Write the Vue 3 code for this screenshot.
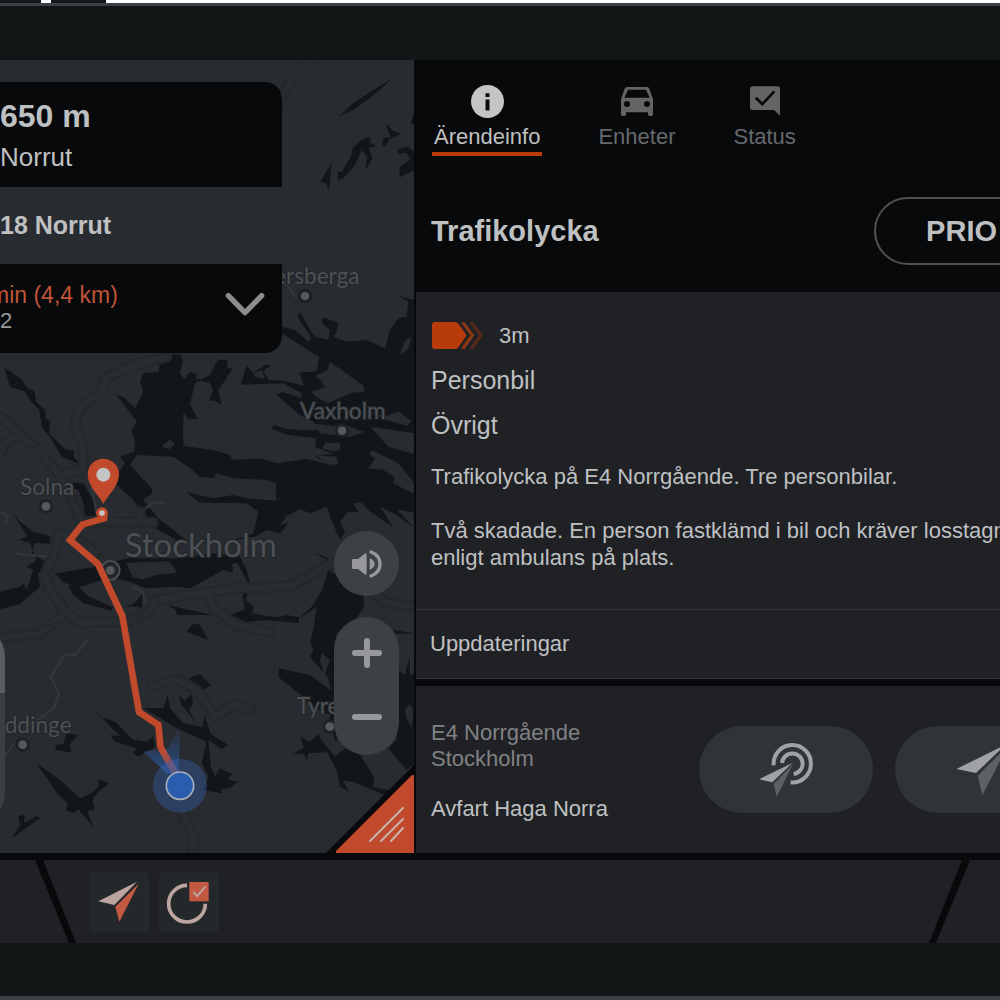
<script setup>
import { ref } from 'vue';

const activeTab = ref('info');

const tabs = [
	{ id: 'info', label: 'Ärendeinfo' },
	{ id: 'units', label: 'Enheter' },
	{ id: 'status', label: 'Status' },
];

const water = [
	'498,42 542,44 548,62 540,98 552,120 570,95 590,101 588,118 605,118 630,106 640,85 655,58 683,62 681,84 698,86 674,122 655,150 664,194 645,182 628,182 640,150 628,128 600,122 585,130 570,192 592,236 565,238 550,218 550,318 640,330 690,344 697,360 780,355 830,370 920,357 1010,378 1040,388 950,354 945,346 1000,342 945,320 948,295 860,284 812,265 825,255 860,268 950,272 940,245 900,226 830,165 845,155 903,174 905,160 850,130 735,134 723,132 740,78 760,98 800,72 812,78 790,92 805,120 850,122 912,137 898,98 950,94 957,50 885,5 845,-20 845,-40 885,-30 925,5 935,-5 892,-70 900,-85 920,-48 945,-10 985,0 990,-30 966,-50 968,-68 1015,-52 1010,-25 1000,-10 1040,5 1100,0 1155,25 1170,-30 1195,-65 1220,-70 1225,-115 1195,-132 1242,-120 1242,518 1190,508 1240,560 1180,520 1140,500 1180,562 1110,515 1085,488 1060,490 1075,515 1045,515 1020,545 1035,575 1020,600 990,530 980,500 930,520 900,508 860,528 840,555 865,550 840,580 800,570 765,590 700,600 660,615 760,580 775,515 740,490 600,488 560,457 640,475 700,465 740,475 828,482 828,430 800,420 700,415 650,400 640,415 600,410 570,385 520,350 410,345 390,375 455,445 458,460 428,480 480,540 560,600 530,600 450,555 400,480 345,430 355,400 375,370 360,350 402,335 405,310 395,270 410,245 350,165 370,170 405,205 430,155 420,125 430,100 475,95 480,70',
	'165,700 300,678 380,655 530,655 640,640 720,650 740,690 752,735 737,780 762,802 755,820 830,832 860,825 897,832 897,850 800,840 740,846 690,825 735,808 728,770 740,720 712,668 695,672 700,698 670,690 570,745 520,740 440,745 390,725 340,715 290,725 240,740 190,728',
	'36,515 60,545 100,575 150,588 152,612 105,608 95,640 150,675 115,700 120,740 60,792 0,808 0,755 60,740 70,730 80,750 100,690 80,680 110,660 90,610 60,600 38,605 82,590',
	'205,735 230,735 262,768 340,802 335,812 250,790 215,760',
	'370,800 400,792 430,760 425,805 405,798',
	'190,425 250,430 280,480 288,530 255,530 250,490 235,450 200,440',
	'12,82 65,118 82,145 103,152 108,185 135,210 137,235 150,245 147,280 195,328 222,332 220,348 238,372 185,350 150,290 125,260 118,210 90,180 75,155 30,140',
	'945,638 985,655 1000,662 975,658',
	'985,690 1090,755 1092,800 1060,850 1010,880 1005,920 1010,1210 985,1150 1000,1080 985,1015 975,1000 990,960 965,940 960,960 972,1000 930,950 940,930 930,905 940,870 950,800 895,838 935,800 965,752',
	'1180,870 1242,880 1182,882',
	'1195,990 1215,1005 1228,950 1230,1010 1242,1000 1242,1272 1220,1290 1165,1225 1190,1200',
	'836,985 930,1005 1005,1060 1005,1130 965,1115 836,1012',
	'500,795 640,825 532,825 525,808',
	'560,875 580,850 600,855 625,900',
	'566,1015 600,1002 632,1035 610,1050',
	'538,1065 552,1082 575,1062 579,1090 567,1110 588,1148 543,1092',
	'430,1104 490,1105 503,1065 510,1105 550,1150 608,1162 613,1125 632,1182 685,1215 665,1228 625,1200 633,1280 645,1310 660,1285 697,1302 683,1318 712,1325 690,1345 665,1346 665,1360 610,1350 625,1310 605,1270 620,1205 530,1165',
	'272,1100 300,1130 345,1145 400,1200 440,1205 460,1190 465,1220 415,1250 400,1240 410,1225 345,1205 330,1185 360,1188',
	'110,1270 180,1320 240,1375 275,1360 295,1340 295,1318 327,1330 290,1360 278,1380 284,1410 262,1412 280,1462 235,1408 220,1420 197,1410 205,1392 175,1365',
	'35,1495 60,1455 55,1427 75,1425 72,1448 110,1428 120,1435',
	'165,1215 190,1212 200,1180 235,1185 208,1215 215,1238 168,1230',
	'880,1240 912,1225 900,1190 930,1205 955,1183 985,1236 925,1240 920,1262 912,1242',
	'960,1195 1005,1250 1035,1225 1080,1245 1122,1310 1120,1342 1180,1352 1160,1368 1060,1325 1030,1322 1048,1355 1020,1340 1010,1290',
	'1018,-672 1060,-712 1182,-788 1110,-726 1060,-690',
	'962,-475 995,-533 990,-475 987,-448 978,-470',
	'1013,-505 1025,-504 1052,-550 1060,-580 1085,-600 1110,-610 1112,-590 1128,-583 1105,-575 1118,-545 1095,-508 1102,-548 1085,-570 1065,-525 1035,-490 1015,-478',
	'1148,-582 1150,-605 1172,-608 1156,-650 1180,-628 1203,-618 1165,-600 1158,-582',
	'1193,-572 1225,-580 1242,-565 1242,-510 1200,-488 1198,-520 1232,-542 1218,-562 1195,-558',
	'1232,-650 1242,-680 1242,-645',
];

const islands = [
	'990,66 1092,138 1092,156 1055,158 985,190 950,172 935,155 975,142 960,118 945,108 982,90',
	'935,250 1000,258 1030,252 1092,276 1050,290 960,280',
	'1112,260 1242,280 1242,342 1165,320',
	'1120,222 1160,228 1195,215 1234,242 1222,258 1160,240',
	'1115,330 1145,345 1195,370 1242,428 1242,462 1180,430 1184,412 1150,390 1105,385 1125,355 1108,345',
	'975,308 1020,310 1020,330 1000,335 968,325',
	'945,345 1010,350 1015,372 990,374',
	'1200,45 1215,0 1235,-8 1224,28',
	'760,98 785,90 795,116 765,112',
	'485,320 510,298 525,312 508,328',
	'378,668 508,664 532,698 470,704 430,718 398,712',
	'1215,1110 1228,1092 1240,1110 1235,1165 1217,1130',
];

const roads = [
	'0,230 60,280 130,345 180,405 245,540',
	'0,340 15,310 45,290',
	'500,50 400,75 320,115 300,158 238,205 225,250 250,320 250,392 180,402',
	'245,545 350,545 460,548',
	'420,515 425,545',
	'290,640 225,592 175,580 165,640 132,705 160,765 195,812 240,848 380,845 440,820 470,780 720,742 780,745 880,735 960,688 1010,665',
	'190,822 120,882 0,892',
	'625,765 640,802 710,857 808,876',
	'458,1038 500,1025 530,1018 590,1050 645,1132 700,1095 750,1106',
	'500,1310 540,1400 580,1490 580,1545',
	'1100,745 1160,788 1242,798',
	'830,-700 870,-775 945,-850',
];

const streets = [
	'262,900 225,945 195,945 152,1010 178,1062 160,1105 100,1150',
	'50,640 80,645 145,650',
	'430,510 458,488 495,488',
	'0,515 25,532 20,545',
	'275,445 288,510',
	'10,1250 45,1210',
	'395,740 428,755 435,785',
	'862,-165 885,-130',
];

const places = [
	{ name: 'ersberga', x: 822, y: -167, cx: 915, cy: -132 },
	{ name: 'Vaxholm', x: 900, y: 236, cx: 1026, cy: 272 },
	{ name: 'Solna', x: 60, y: 464, cx: 138, cy: 499 },
	{ name: 'ddinge', x: 14, y: 1178, cx: 68, cy: 1214 },
	{ name: 'Tyre', x: 890, y: 1123, cx: 989, cy: 1160 },
];
</script>

<template>
	<div class="screen">
		<div class="strip">
			<span class="strip-dark"></span>
			<span class="strip-gap"></span>
			<span class="strip-dark strip-wide"></span>
		</div>
		<div class="bezel bezel-top"></div>

		<main class="main">
			<section class="map">
				<svg class="map-canvas" viewBox="0 -840 1242 2379" preserveAspectRatio="xMidYMid slice" aria-hidden="true">
					<defs>
						<linearGradient id="beam" x1="0" y1="1" x2="0" y2="0">
							<stop offset="0" stop-color="#2a5fae" stop-opacity="0.7" />
							<stop offset="1" stop-color="#2a5fae" stop-opacity="0" />
						</linearGradient>
						<linearGradient id="route-end" gradientUnits="userSpaceOnUse" x1="482" y1="1225" x2="530" y2="1305">
							<stop offset="0" stop-color="#c1492c" />
							<stop offset="1" stop-color="#6a5578" />
						</linearGradient>
					</defs>
					<rect x="0" y="-840" width="1242" height="2379" fill="#282b2f" />
					<g fill="#12161a">
						<polygon v-for="(points, index) in water" :key="index" :points="points" />
					</g>
					<g fill="#282b2f">
						<polygon v-for="(points, index) in islands" :key="index" :points="points" />
					</g>
					<g fill="none" stroke-linecap="round" stroke-linejoin="round">
						<polyline v-for="(points, index) in streets" :key="index" :points="points" stroke="#33363a" stroke-width="7" />
						<polyline v-for="(points, index) in roads" :key="index" :points="points" stroke="#23282a" stroke-width="34" />
						<polyline v-for="(points, index) in roads" :key="index" :points="points" stroke="#282c2f" stroke-width="20" />
					</g>

					<g class="place">
						<template v-for="place in places" :key="place.name">
							<circle :cx="place.cx" :cy="place.cy" r="22" fill="#1e2125" />
							<circle :cx="place.cx" :cy="place.cy" r="13" fill="#55585c" />
							<text :x="place.x" :y="place.y" font-size="68">{{ place.name }}</text>
						</template>
						<circle cx="331" cy="691" r="28" fill="#22262a" stroke="#4b4e53" stroke-width="6" />
						<circle cx="331" cy="691" r="13" fill="#55585c" />
						<text x="374" y="651" font-size="99">Stockholm</text>
					</g>

					<polygon points="430,1235 505,1225 542,1150 535,1310 500,1300" fill="url(#beam)" />
					<g fill="none" stroke-width="20">
						<polyline points="312,520 312,535 247,554 210,600 294,672 367,828 417,1116 475,1155 482,1225" stroke="#c1492c" />
						<path d="M482 1223L530 1305" stroke="url(#route-end)" />
					</g>
					<circle cx="540" cy="1337" r="81" fill="#3562ae" fill-opacity="0.4" />
					<circle cx="540" cy="1337" r="41" fill="#2a5dae" stroke="#a9aeb8" stroke-width="5" />
					<circle cx="306" cy="519" r="13" fill="#c4c4c4" stroke="#c1492c" stroke-width="9" />
					<path d="M310 492C300 470 263 440 263 403a47 47 0 0 1 94 0C357 440 320 470 310 492z" fill="#c1492c" />
					<circle cx="310" cy="404" r="21" fill="#c4c4c4" />
				</svg>

				<div class="side-handle"></div>

				<div class="nav-card">
					<div class="nav-next">
						<p class="nav-distance">650 m</p>
						<p class="nav-road">Norrut</p>
					</div>
					<p class="nav-then">18 Norrut</p>
					<div class="nav-eta">
						<div>
							<p class="nav-time">min (4,4 km)</p>
							<p class="nav-arrival">2</p>
						</div>
						<button type="button" class="nav-toggle" aria-label="Visa mer">
							<svg width="40" height="24" viewBox="0 0 120 72">
								<path d="M10 11L60 62L110 11" fill="none" stroke="#8b8c8e" stroke-width="16" stroke-linecap="round" stroke-linejoin="round" />
							</svg>
						</button>
					</div>
				</div>

				<div class="map-tools">
					<button type="button" class="tool-sound" aria-label="Ljud">
						<svg width="30" height="28" viewBox="0 0 90 84">
							<path d="M4 27H18L38 11Q44 7 44 14V70Q44 77 38 73L18 57H4Q0 57 0 53V31Q0 27 4 27z" fill="#96989c" />
							<path d="M53 24Q68 32 68 42Q68 52 53 60z" fill="#96989c" />
							<path d="M57 6Q84 16 84 42Q84 68 57 78" fill="none" stroke="#96989c" stroke-width="10" stroke-linecap="round" />
						</svg>
					</button>
					<div class="tool-zoom">
						<button type="button" aria-label="Zooma in">
							<svg width="30" height="30" viewBox="0 0 30 30">
								<path d="M15 3V27M3 15H27" stroke="#96989c" stroke-width="6" stroke-linecap="round" />
							</svg>
						</button>
						<button type="button" aria-label="Zooma ut">
							<svg width="30" height="30" viewBox="0 0 30 30">
								<path d="M3 15H27" stroke="#96989c" stroke-width="6" stroke-linecap="round" />
							</svg>
						</button>
					</div>
				</div>

				<button type="button" class="corner" aria-label="Ändra storlek">
					<svg width="88" height="88" viewBox="0 0 88 88">
						<path d="M88 0V88H0z" fill="#08090b" />
						<path d="M86 10L88 10V88H10V86z" fill="#c1492c" />
						<path d="M44 76L77 43M55 76L77 54M65 76L77 63" stroke="#c9b3ab" stroke-width="2" stroke-linecap="round" />
					</svg>
				</button>
			</section>

			<section class="panel">
				<header class="head">
					<nav class="tabs">
						<button
							v-for="tab in tabs"
							:key="tab.id"
							type="button"
							class="tab"
							:class="{ 'tab-active': activeTab === tab.id }"
							@click="activeTab = tab.id">
							<span class="tab-icon">
								<svg v-if="tab.id === 'info'" width="33" height="33" viewBox="0 0 100 100">
									<circle cx="50" cy="50" r="50" fill="#c3c4c6" />
									<path d="M44 25H56V36H44zM44 44H56V77H44z" fill="#08090b" />
								</svg>
								<svg v-else-if="tab.id === 'units'" width="32" height="29" viewBox="0 0 96 87">
									<path
										fill="#636466"
										fill-rule="evenodd"
										d="M18 0H78Q83 0 85 5L96 37V82Q96 87 91 87H86Q81 87 81 82V76H15V82Q15 87 10 87H5Q0 87 0 82V37L11 5Q13 0 18 0zM21 8L10 32H86L75 8zM18 42a9 9 0 1 0 0 18a9 9 0 1 0 0 -18zM78 42a9 9 0 1 0 0 18a9 9 0 1 0 0 -18z" />
								</svg>
								<svg v-else width="30" height="30" viewBox="0 0 90 90">
									<path d="M8 1H82a8 8 0 0 1 8 8V89L72 72H8a8 8 0 0 1-8-8V9a8 8 0 0 1 8-8z" fill="#636466" />
									<path d="M17 35L37 54L73 16" fill="none" stroke="#08090b" stroke-width="8" />
								</svg>
							</span>
							{{ tab.label }}
						</button>
					</nav>
					<div class="title-row">
						<h1>Trafikolycka</h1>
						<button type="button" class="prio">PRIO</button>
					</div>
				</header>

				<article class="details">
					<div class="age">
						<svg width="53" height="27" viewBox="0 0 159 81">
							<path d="M12 0H72Q79 0 83 6L107 40L83 75Q79 81 72 81H12Q3 81 3 72V9Q3 0 12 0z" fill="#b83c0b" />
							<path d="M97 4L124 40L97 77" fill="none" stroke="#8a3715" stroke-width="10" stroke-linecap="round" />
							<path d="M123 4L150 40L123 77" fill="none" stroke="#55291b" stroke-width="10" stroke-linecap="round" />
						</svg>
						<span>3m</span>
					</div>
					<p class="kind">Personbil</p>
					<p class="kind">Övrigt</p>
					<p class="note">Trafikolycka på E4 Norrgående. Tre personbilar.</p>
					<p class="note">Två skadade. En person fastklämd i bil och kräver losstagni<br />enligt ambulans på plats.</p>
				</article>

				<h2 class="updates">Uppdateringar</h2>

				<div class="location">
					<div class="address">
						<p class="street">E4 Norrgående<br />Stockholm</p>
						<p>Avfart Haga Norra</p>
					</div>
					<button type="button" class="pill" aria-label="Sänd position">
						<svg width="54" height="54" viewBox="238 126 162 162">
							<g fill="none" stroke="#a0a2a5" stroke-width="12">
								<path d="M282 193A56 56 0 1 1 333 244" />
								<path d="M307 186A31 31 0 1 1 342 219" />
							</g>
							<path d="M338 186L238 235L278 244z" fill="#a0a2a5" />
							<path d="M340 189L282 249L291 288z" fill="#5d6163" />
						</svg>
					</button>
					<button type="button" class="pill" aria-label="Navigera">
						<svg width="52" height="52" viewBox="828 131 156 156">
							<path d="M977 133L829 206L888 218z" fill="#a0a2a5" />
							<path d="M983 137L893 226L907 285z" fill="#5d6163" />
						</svg>
					</button>
				</div>
			</section>
		</main>

		<footer class="dock">
			<div class="dock-left"></div>
			<div class="dock-tray">
				<button type="button" class="tile" aria-label="Navigering">
					<svg width="60" height="60" viewBox="0 0 180 180">
						<path d="M144 29L28 88L76 99z" fill="#bba59e" />
						<path d="M149 35L79 104L91 149z" fill="#c25940" />
					</svg>
				</button>
				<button type="button" class="tile" aria-label="Uppdrag">
					<svg width="60" height="60" viewBox="0 0 180 180">
						<path d="M84 40A55 55 0 1 0 139 95" fill="none" stroke="#bba59e" stroke-width="11" />
						<rect x="91" y="30" width="58" height="58" fill="#c25940" />
						<path d="M103 60L115 72L139 44" fill="none" stroke="#bba59e" stroke-width="6" />
					</svg>
				</button>
			</div>
			<div class="dock-right"></div>
		</footer>
		<div class="bezel bezel-bottom"></div>
	</div>
</template>

<style>
body {
	background: #121616;
}
</style>

<style scoped>
.screen {
	overflow: hidden;
	background: #08090b;
	color: #bfc0c2;
	font-family: "Liberation Sans", Arial, sans-serif;
	font-size: 22px;
	line-height: 27px;
}

p,
h1,
h2 {
	margin: 0;
}

button {
	margin: 0;
	padding: 0;
	border: none;
	background: none;
	color: inherit;
	font: inherit;
	cursor: pointer;
}

svg {
	display: block;
}

.strip {
	display: flex;
	height: 3px;
	background: #fff;
}

.strip-dark {
	width: 41px;
	background: #121616;
}

.strip-gap {
	width: 10px;
}

.strip-wide {
	width: 55px;
}

.bezel {
	background: #121616;
}

.bezel-top {
	height: 54px;
	border-top: 3px solid #3a4246;
}

.bezel-bottom {
	height: 53px;
	border-bottom: 4px solid #3a4246;
}

.main {
	display: grid;
	grid-template-columns: 41.4% 1fr;
}

.map {
	position: relative;
	overflow: hidden;
}

.map-canvas {
	position: absolute;
	inset: 0;
	width: 100%;
	height: 100%;
}

.place text {
	fill: #4d5055;
	stroke: #23272a;
	stroke-width: 6px;
	paint-order: stroke;
	font-family: Lato, "Noto Sans", sans-serif;
}

.side-handle {
	position: absolute;
	left: -60px;
	bottom: 28px;
	width: 65px;
	height: 200px;
	border-radius: 32px;
	background: linear-gradient(#5a5d61 68px, #3b3e42 68px);
}

.nav-card {
	position: absolute;
	top: 22px;
	left: 0;
	width: 68%;
	overflow: hidden;
	border-radius: 0 17px 17px 0;
	background: #08090b;
}

.nav-next {
	padding: 16px 0 15px;
}

.nav-distance {
	font-size: 32px;
	font-weight: bold;
	line-height: 36px;
}

.nav-road {
	margin-top: 8px;
	font-size: 26px;
	line-height: 30px;
}

.nav-then {
	background: #282b2f;
	font-size: 25px;
	font-weight: bold;
	line-height: 77px;
}

.nav-eta {
	display: flex;
	align-items: flex-start;
	justify-content: space-between;
	padding: 18px 17px 20px 0;
}

.nav-time {
	color: #bf5438;
	font-size: 23px;
	line-height: 27px;
	text-indent: -10px;
}

.nav-arrival {
	color: #97989a;
	line-height: 24px;
}

.nav-toggle {
	padding-top: 10px;
}

.map-tools {
	position: absolute;
	right: 15px;
	bottom: 98px;
	display: flex;
	flex-direction: column;
	gap: 21px;
	width: 65px;
}

.tool-sound,
.tool-zoom {
	display: grid;
	place-items: center;
	border-radius: 33px;
	background: #3d4044;
}

.tool-sound {
	height: 65px;
}

.tool-zoom {
	padding: 4px 0 6px;
}

.tool-zoom button {
	display: grid;
	place-items: center;
	width: 100%;
	height: 64px;
}

.corner {
	position: absolute;
	right: 0;
	bottom: 0;
}

.panel {
	min-width: 0;
	overflow: hidden;
	padding-left: 2px;
}

.head {
	padding: 24px 0 27px 15px;
}

.tabs {
	display: flex;
	gap: 54px;
	padding-left: 1px;
}

.tab {
	padding: 0 2px 2px;
	border-bottom: 4px solid transparent;
	color: #65696e;
}

.tab-icon {
	display: grid;
	place-items: center;
	height: 34px;
	margin-bottom: 5px;
}

.tab-active {
	border-bottom-color: #b83c0b;
	color: #bfc0c2;
}

.title-row {
	display: flex;
	align-items: center;
	justify-content: space-between;
	margin-top: 41px;
}

h1 {
	font-size: 29px;
	line-height: 36px;
}

.prio {
	flex: none;
	height: 68px;
	margin-right: -63px;
	padding: 0 64px 0 50px;
	border: 2px solid #505153;
	border-radius: 34px;
	font-size: 29px;
	font-weight: bold;
}

.details {
	padding: 30px 0 38px 15px;
	background: #202125;
	white-space: nowrap;
}

.age {
	display: flex;
	gap: 15px;
	margin-bottom: 16px;
}

.kind {
	margin-bottom: 15px;
	font-size: 25px;
	line-height: 30px;
}

.note {
	margin-top: 27px;
}

.kind + .note {
	margin-top: 23px;
}

.updates {
	padding: 0 14px;
	border-top: 1px solid #333438;
	border-bottom: 1px solid #333438;
	background: #202125;
	font-size: 22px;
	font-weight: normal;
	line-height: 68px;
}

.location {
	display: grid;
	grid-template-columns: 246px 174px 174px;
	align-items: center;
	gap: 22px;
	height: 167px;
	margin-top: 7px;
	padding-left: 15px;
	background: #202125;
}

.address {
	padding-top: 2px;
}

.street {
	margin-bottom: 23px;
	color: #808184;
	line-height: 26px;
}

.pill {
	display: grid;
	place-items: center;
	height: 87px;
	border-radius: 44px;
	background: #2f3437;
}

.dock {
	display: grid;
	grid-template-columns: 69px 1fr 64px;
	height: 83px;
	border-top: 7px solid #08090b;
}

.dock-left,
.dock-tray,
.dock-right {
	background: #202125;
}

.dock-left {
	clip-path: polygon(0 0, 35px 0, 100% 100%, 0 100%);
}

.dock-tray {
	display: flex;
	align-items: center;
	gap: 10px;
	margin: 0 -26px;
	padding-left: 46px;
	clip-path: polygon(0 0, 100% 0, calc(100% - 33px) 100%, 33px 100%);
}

.dock-right {
	clip-path: polygon(34px 0, 100% 0, 100% 100%, 0 100%);
}

.tile {
	border-radius: 4px;
	background: #24282b;
}
</style>
